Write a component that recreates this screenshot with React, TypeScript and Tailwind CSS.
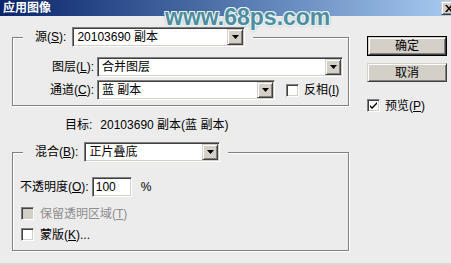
import React from 'react';

const sunken =
  'bg-white border border-t-[#808080] border-l-[#808080] border-r-white border-b-white shadow-[inset_1px_1px_0_#404040,inset_-1px_-1px_0_#d4d0c8]';
const raised =
  'bg-[#d4d0c8] border border-t-[#d4d0c8] border-l-[#d4d0c8] border-r-[#404040] border-b-[#404040] shadow-[inset_1px_1px_0_#fff,inset_-1px_-1px_0_#808080]';

const Arrow = () => (
  <div className={`${raised} w-[16px] h-[16px] flex items-center justify-center shrink-0`}>
    <svg width="7" height="4" viewBox="0 0 7 4">
      <path d="M0 0h7L3.5 4z" fill="#000" />
    </svg>
  </div>
);

const Select = ({ value, className }: { value: string; className: string }) => (
  <div className={`${sunken} ${className} h-[20px] flex items-center justify-between p-[1px] shrink-0`}>
    <span className="pl-[3px] leading-[14px] whitespace-nowrap">{value}</span>
    <Arrow />
  </div>
);

const Check = ({ checked, disabled }: { checked?: boolean; disabled?: boolean }) => (
  <div
    className={`w-[13px] h-[13px] shrink-0 flex items-center justify-center border border-t-[#808080] border-l-[#808080] border-r-white border-b-white shadow-[inset_1px_1px_0_#404040,inset_-1px_-1px_0_#d4d0c8] ${
      disabled ? 'bg-[#d4d0c8]' : 'bg-white'
    }`}
  >
    {checked && (
      <svg width="7" height="7" viewBox="0 0 7 7">
        <path d="M0 3l2 2 5-5v2L2 7 0 5z" fill="#000" />
      </svg>
    )}
  </div>
);

const Label = ({ text, k }: { text: string; k: string }) => (
  <span className="whitespace-nowrap leading-[14px]">
    {text}(<span className="underline">{k}</span>):
  </span>
);

export default function App() {
  return (
    <div className='relative w-[451px] h-[265px] overflow-hidden bg-[#ececec] text-[12px] text-black [font-family:"Liberation_Sans","Noto_Sans_CJK_SC",sans-serif]'>
      {/* title bar */}
      <div className="h-[16px] bg-gradient-to-r from-[#0a246a] to-[#a6caf0] flex items-center pl-[3px]">
        <span className="text-white font-bold leading-[14px]">应用图像</span>
      </div>
      <div className={`${raised} absolute left-[441px] top-[1px] w-[16px] h-[14px] flex items-center pl-[3px]`}>
        <svg width="8" height="7" viewBox="0 0 8 7">
          <path d="M0 0h2l2 2.5L6 0h2L5 3.5 8 7H6L4 4.5 2 7H0l3-3.5z" fill="#000" />
        </svg>
      </div>

      {/* watermark */}
      <div className='absolute left-[165px] top-[4px] text-[23px] font-bold text-[#4f8c9f] leading-[26px] [font-family:"Liberation_Sans",sans-serif] [text-shadow:1px_1px_0_#eaf6f6,-1px_-1px_0_#eaf6f6,1px_-1px_0_#eaf6f6,-1px_1px_0_#eaf6f6,0_0_3px_#3d7080]'>
        www.68ps.com
      </div>

      <div className="flex">
        {/* left column */}
        <div className="ml-[12px] mt-[11px] w-[337px] flex flex-col">
          <fieldset className="border border-[#808080] shadow-[inset_1px_1px_0_#fff,1px_1px_0_#fff] pb-[5px]">
            <legend className="ml-[10px] pl-[12px] pr-[8px] bg-[#ececec]">
              <div className="flex items-center gap-[6px]">
                <Label text="源" k="S" />
                <Select value="20103690 副本" className="w-[173px]" />
              </div>
            </legend>
            <div className="mt-[10px] flex items-center">
              <div className="w-[81px] text-right">
                <Label text="图层" k="L" />
              </div>
              <Select value="合并图层" className="w-[246px] ml-[3px]" />
            </div>
            <div className="mt-[3px] flex items-center">
              <div className="w-[81px] text-right">
                <Label text="通道" k="C" />
              </div>
              <Select value="蓝 副本" className="w-[178px] ml-[3px]" />
              <div className="ml-[11px]">
                <Check />
              </div>
              <span className="ml-[5px] leading-[14px]">
                反相(<span className="underline">I</span>)
              </span>
            </div>
          </fieldset>

          <div className="mt-[11px] h-[16px] pl-[53px] flex items-center whitespace-nowrap leading-[14px]">
            <span>目标:</span>
            <span className="ml-[8px]">20103690 副本(蓝 副本)</span>
          </div>

          <fieldset className="mt-[9px] border border-[#808080] shadow-[inset_1px_1px_0_#fff,1px_1px_0_#fff] pb-[9px]">
            <legend className="ml-[10px] pl-[12px] pr-[8px] bg-[#ececec]">
              <div className="flex items-center gap-[6px]">
                <Label text="混合" k="B" />
                <Select value="正片叠底" className="w-[136px]" />
              </div>
            </legend>
            <div className="mt-[15px] pl-[7px] flex items-center">
              <Label text="不透明度" k="O" />
              <div className={`${sunken} ml-[3px] w-[40px] h-[20px] flex items-center pl-[3px] leading-[14px]`}>100</div>
              <span className="ml-[9px] leading-[14px]">%</span>
            </div>
            <div className="mt-[10px] pl-[8px] flex items-center h-[13px]">
              <Check disabled />
              <span className="ml-[6px] text-[#8c8c8c] leading-[14px]">
                保留透明区域(<span className="underline">T</span>)
              </span>
            </div>
            <div className="mt-[8px] pl-[8px] flex items-center h-[13px]">
              <Check />
              <span className="ml-[6px] leading-[14px]">
                蒙版(<span className="underline">K</span>)...
              </span>
            </div>
          </fieldset>
        </div>

        {/* right column */}
        <div className="ml-[18px] mt-[20px] flex flex-col w-[80px]">
          <div className="border border-black">
            <div className={`${raised} h-[18px] flex items-center justify-center leading-[14px]`}>确定</div>
          </div>
          <div className={`${raised} mt-[7px] h-[19px] flex items-center justify-center leading-[14px]`}>取消</div>
          <div className="mt-[17px] flex items-center h-[13px]">
            <Check checked />
            <span className="ml-[5px] leading-[14px]">
              预览(<span className="underline">P</span>)
            </span>
          </div>
        </div>
      </div>

      <div className="absolute left-0 bottom-0 w-full h-[2px] bg-[#dcd8d0]" />
    </div>
  );
}
